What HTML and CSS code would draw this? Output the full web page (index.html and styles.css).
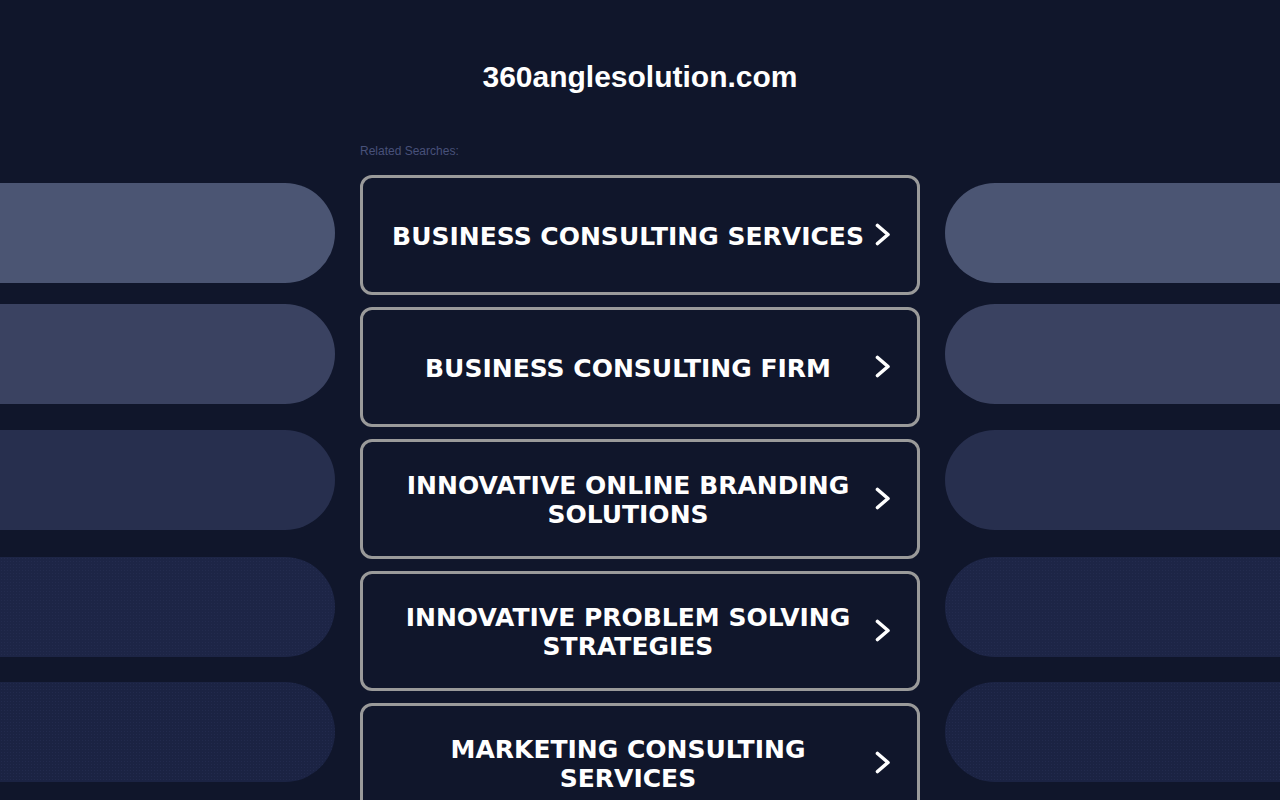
FILE: index.html
```html
<!DOCTYPE html>
<html lang="en">
<head>
<meta charset="utf-8">
<title>360anglesolution.com</title>
<link rel="stylesheet" href="styles.css">
</head>
<body>
<div class="page">
  <div class="side side-left">
    <div class="pill pill-1"></div>
    <div class="pill pill-2"></div>
    <div class="pill pill-3"></div>
    <div class="pill pill-4"></div>
    <div class="pill pill-5"></div>
  </div>
  <main class="center">
    <h1 class="domain">360anglesolution.com</h1>
    <div class="related">Related Searches:</div>
    <div class="links">
      <a class="link" href="#"><span class="link-text">BUSINESS CONSULTING SERVICES</span><svg class="chev" width="16" height="24" viewBox="0 0 16 24"><polyline points="2.5,2.5 13,11.5 2.5,20.5" fill="none" stroke="#fff" stroke-width="3.6" stroke-linecap="round" stroke-linejoin="round"/></svg></a>
      <a class="link" href="#"><span class="link-text">BUSINESS CONSULTING FIRM</span><svg class="chev" width="16" height="24" viewBox="0 0 16 24"><polyline points="2.5,2.5 13,11.5 2.5,20.5" fill="none" stroke="#fff" stroke-width="3.6" stroke-linecap="round" stroke-linejoin="round"/></svg></a>
      <a class="link" href="#"><span class="link-text">INNOVATIVE ONLINE BRANDING SOLUTIONS</span><svg class="chev" width="16" height="24" viewBox="0 0 16 24"><polyline points="2.5,2.5 13,11.5 2.5,20.5" fill="none" stroke="#fff" stroke-width="3.6" stroke-linecap="round" stroke-linejoin="round"/></svg></a>
      <a class="link" href="#"><span class="link-text">INNOVATIVE PROBLEM SOLVING STRATEGIES</span><svg class="chev" width="16" height="24" viewBox="0 0 16 24"><polyline points="2.5,2.5 13,11.5 2.5,20.5" fill="none" stroke="#fff" stroke-width="3.6" stroke-linecap="round" stroke-linejoin="round"/></svg></a>
      <a class="link" href="#"><span class="link-text">MARKETING CONSULTING SERVICES</span><svg class="chev" width="16" height="24" viewBox="0 0 16 24"><polyline points="2.5,2.5 13,11.5 2.5,20.5" fill="none" stroke="#fff" stroke-width="3.6" stroke-linecap="round" stroke-linejoin="round"/></svg></a>
    </div>
  </main>
  <div class="side side-right">
    <div class="pill pill-1"></div>
    <div class="pill pill-2"></div>
    <div class="pill pill-3"></div>
    <div class="pill pill-4"></div>
    <div class="pill pill-5"></div>
  </div>
</div>
</body>
</html>
```

FILE: styles.css
```css
html, body {
  margin: 0;
  padding: 0;
  height: 800px;
  overflow: hidden;
  background: #10162b;
}

.page {
  display: grid;
  grid-template-columns: 1fr 560px 1fr;
  column-gap: 25px;
  height: 800px;
}

.side {
  display: flex;
  flex-direction: column;
  padding-top: 183px;
}

.pill {
  height: 100px;
  flex-shrink: 0;
}

.pill-1 { background: #4b5573; }
.pill-2 { background: #3a4261; margin-top: 21px; }
.pill-3 { background: #272f4e; margin-top: 26px; }
.pill-4 {
  background-color: #1d2546;
  background-image: radial-gradient(rgba(120, 135, 190, 0.07) 0.6px, transparent 0.9px);
  background-size: 3px 3px;
  margin-top: 27px;
}
.pill-5 {
  background-color: #1b2343;
  background-image: radial-gradient(rgba(120, 135, 190, 0.08) 0.6px, transparent 0.9px);
  background-size: 3px 3px;
  margin-top: 25px;
}

.side-left .pill { border-radius: 0 50px 50px 0; }
.side-right .pill { border-radius: 50px 0 0 50px; }

.center {
  display: flex;
  flex-direction: column;
  padding-top: 60px;
}

.domain {
  margin: 0;
  font-family: "Liberation Sans", Arial, sans-serif;
  font-weight: bold;
  font-size: 30px;
  line-height: 34px;
  color: #ffffff;
  text-align: center;
}

.related {
  margin-top: 50px;
  font-family: "Liberation Sans", Arial, sans-serif;
  font-size: 12px;
  line-height: 14px;
  color: #48517a;
}

.links {
  margin-top: 17px;
  display: flex;
  flex-direction: column;
  gap: 12px;
}

.link {
  box-sizing: border-box;
  height: 120px;
  border: 3px solid #9a9a9a;
  border-radius: 12px;
  display: flex;
  align-items: center;
  padding: 0 26px 0 22px;
  text-decoration: none;
  color: #ffffff;
  background: #10162b;
}

.link-text {
  flex: 1;
  text-align: center;
  font-family: "DejaVu Sans", Verdana, sans-serif;
  font-weight: bold;
  font-size: 25px;
  line-height: 29px;
  margin-right: 4px;
  padding-top: 2px;
}

.chev {
  flex-shrink: 0;
  display: block;
}
```
